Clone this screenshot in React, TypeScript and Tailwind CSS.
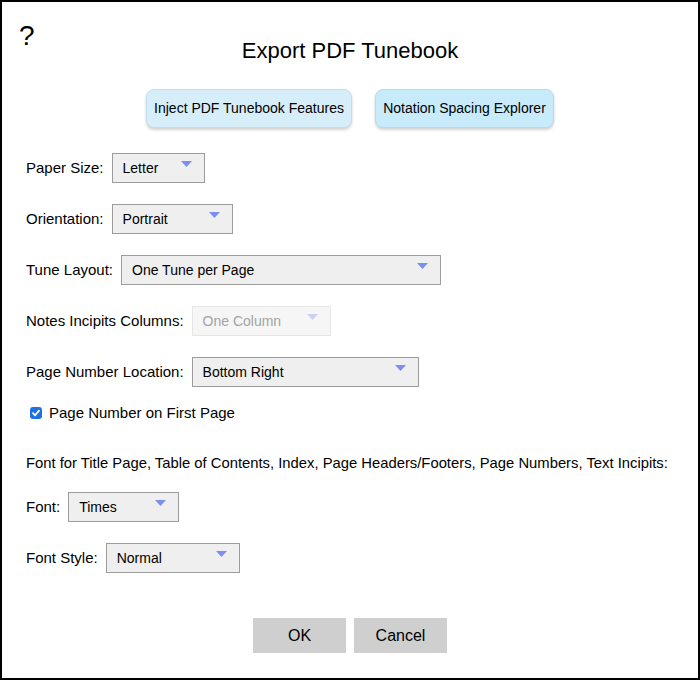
import React from 'react';

interface SelectBoxProps {
  value: string;
  width: string;
  disabled?: boolean;
}

const Arrow = ({ disabled }: { disabled?: boolean }) => (
  <svg width="11" height="6" viewBox="0 0 11 6" className="absolute right-[12px] top-[7px]">
    <polygon points="0,0 11,0 5.5,6" fill={disabled ? '#c9d1f5' : '#7d8ef0'} />
  </svg>
);

const SelectBox: React.FC<SelectBoxProps> = ({ value, width, disabled }) => {
  return (
    <div
      className={`relative h-[30px] flex items-center pl-[10px] text-[14px] ${width} ${
        disabled
          ? 'bg-[#f6f6f6] border border-[#e6e6e6] text-[#a3a3a3]'
          : 'bg-[#efefef] border border-[#9c9c9c] text-black'
      }`}
    >
      {value}
      <Arrow disabled={disabled} />
    </div>
  );
};

const Row = ({ label, children }: { label: string; children: React.ReactNode }) => (
  <div className="flex items-center gap-[8px]">
    <span>{label}</span>
    {children}
  </div>
);

export default function App() {
  return (
    <div
      className="relative w-[700px] h-[680px] border-2 border-black bg-white text-black text-[15px]"
      style={{ fontFamily: '"Liberation Sans", Arial, sans-serif' }}
    >
      <span className="absolute left-[17px] top-[20px] text-[28px] leading-none">?</span>

      <div className="flex flex-col">
        <h1 className="mt-[36px] text-center text-[22px] leading-[26px]">Export PDF Tunebook</h1>

        <div className="mt-[25px] flex justify-center gap-[23px]">
          <button className="w-[206px] h-[39px] rounded-[8px] bg-[#d6eefa] border border-[#c2deec] shadow-[0_2px_3px_rgba(0,0,0,0.18)] text-[14px]">
            Inject PDF Tunebook Features
          </button>
          <button className="w-[179px] h-[39px] rounded-[8px] bg-[#c8ebfb] border border-[#b5dbee] shadow-[0_2px_3px_rgba(0,0,0,0.18)] text-[14px]">
            Notation Spacing Explorer
          </button>
        </div>

        <div className="mt-[25px] pl-[24px] flex flex-col gap-[21px]">
          <Row label="Paper Size:">
            <SelectBox value="Letter" width="w-[93px]" />
          </Row>
          <Row label="Orientation:">
            <SelectBox value="Portrait" width="w-[121px]" />
          </Row>
          <Row label="Tune Layout:">
            <SelectBox value="One Tune per Page" width="w-[320px]" />
          </Row>
          <Row label="Notes Incipits Columns:">
            <SelectBox value="One Column" width="w-[139px]" disabled />
          </Row>
          <Row label="Page Number Location:">
            <SelectBox value="Bottom Right" width="w-[227px]" />
          </Row>
        </div>

        <div className="mt-[16px] pl-[28px] flex items-center gap-[7px] h-[20px]">
          <span className="w-[12px] h-[12px] rounded-[3px] bg-[#1f6fe5] flex items-center justify-center">
            <svg width="10" height="10" viewBox="0 0 10 10">
              <path d="M2 5.2 L4.1 7.3 L8 2.6" stroke="white" strokeWidth="1.8" fill="none" strokeLinecap="round" strokeLinejoin="round" />
            </svg>
          </span>
          <span>Page Number on First Page</span>
        </div>

        <div className="mt-[30px] pl-[24px] leading-[20px] text-[14.8px]">
          Font for Title Page, Table of Contents, Index, Page Headers/Footers, Page Numbers, Text Incipits:
        </div>

        <div className="mt-[19px] pl-[24px] flex flex-col gap-[21px]">
          <Row label="Font:">
            <SelectBox value="Times" width="w-[111px]" />
          </Row>
          <Row label="Font Style:">
            <SelectBox value="Normal" width="w-[134px]" />
          </Row>
        </div>

        <div className="mt-[45px] flex justify-center gap-[8px]">
          <button className="w-[93px] h-[35px] bg-[#cfcfcf] text-[16px]">OK</button>
          <button className="w-[93px] h-[35px] bg-[#cfcfcf] text-[16px]">Cancel</button>
        </div>
      </div>
    </div>
  );
}
